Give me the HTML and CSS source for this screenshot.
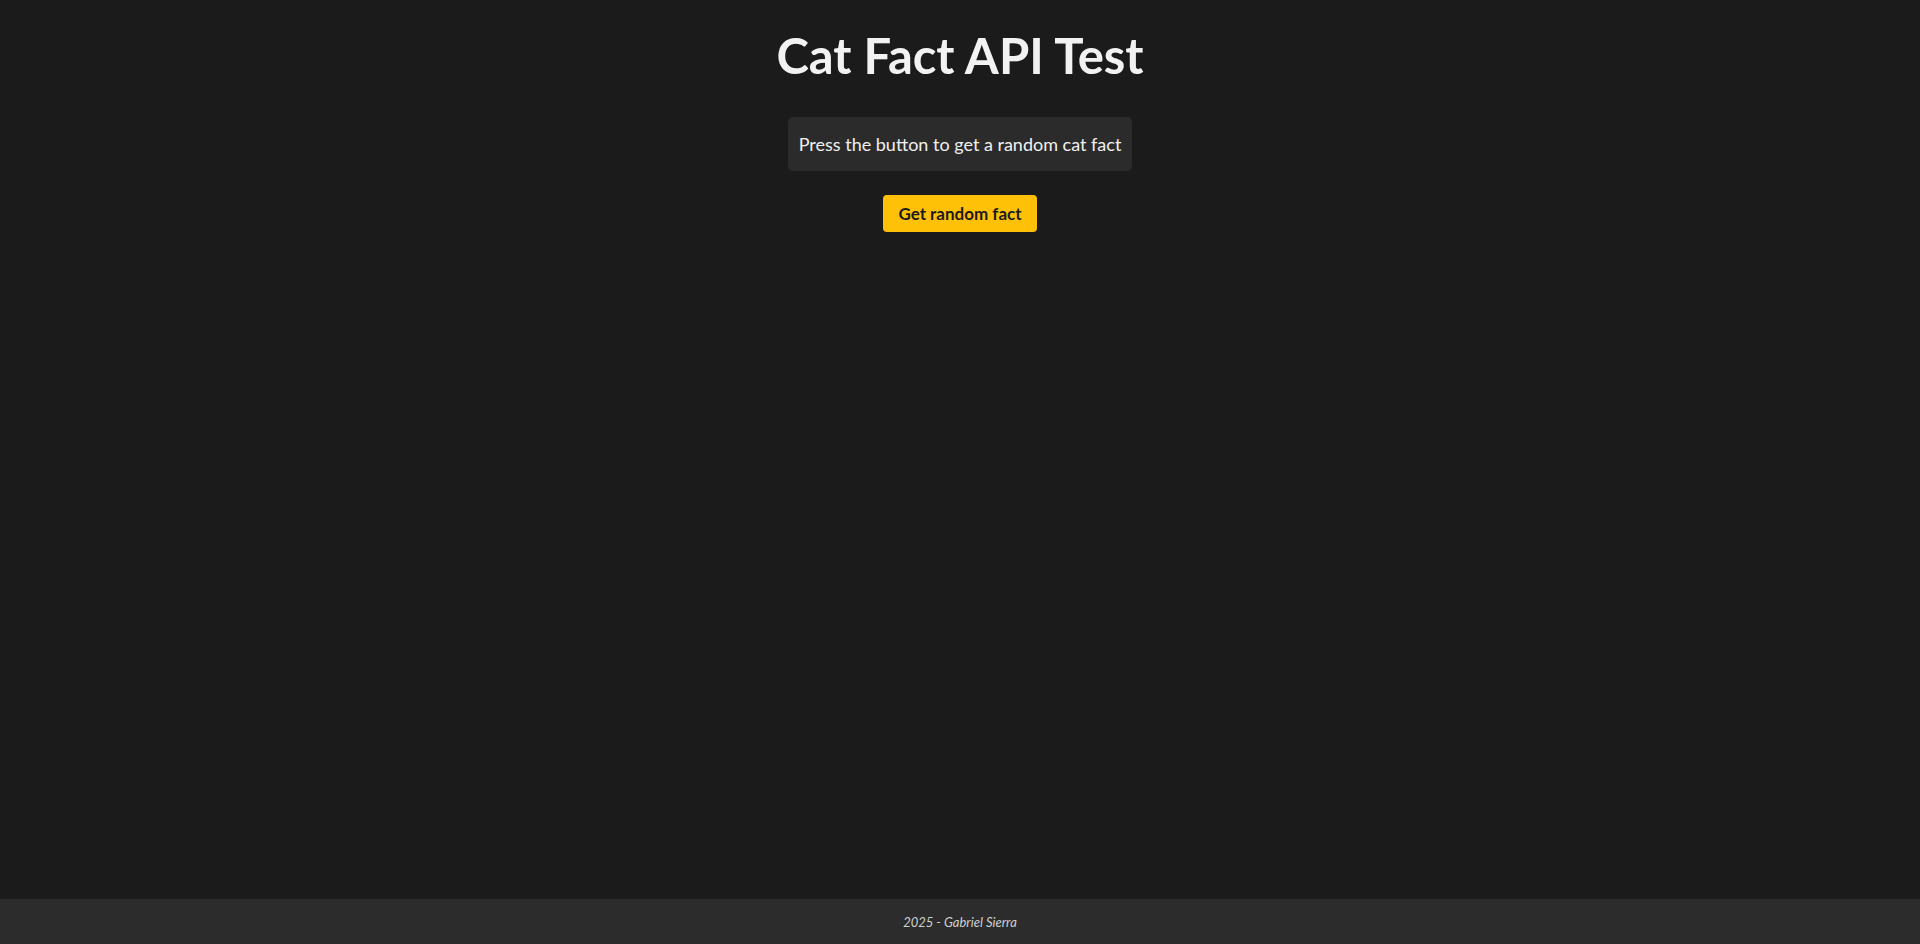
FILE: index.html
```html
<!DOCTYPE html>
<html lang="en">
<head>
<meta charset="utf-8">
<title>Cat Fact API Test</title>
<link rel="stylesheet" href="styles.css">
</head>
<body>
<main class="main">
  <h1 class="title">Cat Fact API Test</h1>
  <p class="fact">Press the button to get a random cat fact</p>
  <button class="btn" type="button">Get random fact</button>
</main>
<footer class="footer">
  <p class="footer-text">2025 - Gabriel Sierra</p>
</footer>
</body>
</html>
```

FILE: styles.css
```css
* { box-sizing: border-box; }
html, body { margin: 0; padding: 0; }
body {
  background: #1b1b1b;
  color: #f0f0f0;
  font-family: "Lato", "Open Sans", sans-serif;
  min-height: 100vh;
  display: flex;
  flex-direction: column;
}
.main {
  flex: 1;
  display: flex;
  flex-direction: column;
  align-items: center;
  padding-top: 25px;
}
.title {
  margin: 0;
  font-size: 49px;
  font-weight: 700;
  line-height: 60px;
  color: #f2f2f2;
}
.fact {
  margin: 32px 0 0;
  background: #2b2b2b;
  border-radius: 5px;
  padding: 14px 11px;
  font-size: 18px;
  line-height: 26px;
  color: #f0f0f0;
}
.btn {
  margin-top: 24px;
  background: #ffc107;
  color: #1b1b1b;
  border: none;
  border-radius: 4px;
  padding: 8px 15.5px;
  font-family: inherit;
  font-size: 17px;
  font-weight: 700;
  line-height: 21px;
}
.footer {
  height: 45px;
  background: #2c2c2c;
  display: flex;
  align-items: center;
  justify-content: center;
}
.footer-text {
  margin: 0;
  font-size: 13px;
  font-style: italic;
  color: #d0d0d0;
}
```
